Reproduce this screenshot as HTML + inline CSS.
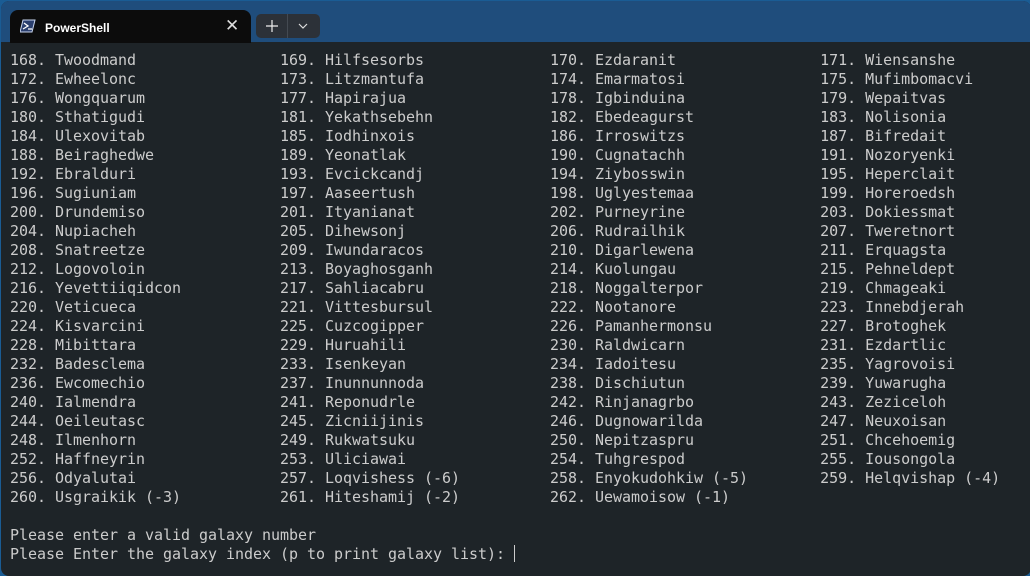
<!DOCTYPE html>
<html><head><meta charset="utf-8"><style>
*{margin:0;padding:0;box-sizing:border-box}
html,body{width:1030px;height:571px;overflow:hidden;background:#1a5c94}
.win{position:absolute;left:1px;top:1px;width:1030px;height:575px;border-radius:8px;background:#1e2428;overflow:hidden}
.bar{position:absolute;left:0;top:0;width:100%;height:41px;background:#1f4d7c}
.tab{position:absolute;left:9px;top:9px;width:241px;height:33px;background:#0c0c0c;border-radius:8px 8px 0 0}
.tab .t{position:absolute;left:35px;top:11px;color:#fff;font:bold 12px "Liberation Sans",sans-serif}
.tab .x{position:absolute;left:215px;top:6px;color:#ddd;font:17px "DejaVu Sans",sans-serif}
.btns{position:absolute;left:255px;top:13px;width:64px;height:24px;background:#2c3138;border-radius:5px}
.btns .sep{position:absolute;left:31px;top:0;width:1px;height:24px;background:#444a52}
pre{position:absolute;left:9px;top:50px;color:#cccccc;font:15px/19px "DejaVu Sans Mono","Liberation Mono",monospace;letter-spacing:-0.03px;white-space:pre}
.cur{display:inline-block;width:1px;height:17px;background:#ccc;vertical-align:-3px}
</style></head><body><div class="win">
<div class="bar"></div>
<div class="tab">
<svg style="position:absolute;left:10px;top:9px" width="16" height="14" viewBox="0 0 16 14"><path d="M3 1h12l-3 12H0z" fill="#2b3f6e" stroke="#c9d6f0" stroke-width="1"/><path d="M4 4l4 3-5 3M8 10h4" stroke="#fff" stroke-width="1.3" fill="none"/></svg>
<span class="t">PowerShell</span><span class="x">✕</span></div>
<div class="btns"><div class="sep"></div>
<svg style="position:absolute;left:9px;top:5px" width="14" height="14"><path d="M7 1v12M1 7h12" stroke="#eee" stroke-width="1.2"/></svg>
<svg style="position:absolute;left:42px;top:9px" width="10" height="6"><path d="M1 1l4 4 4-4" stroke="#ddd" stroke-width="1.2" fill="none"/></svg>
</div>
<pre>168. Twoodmand                169. Hilfsesorbs              170. Ezdaranit                171. Wiensanshe
172. Ewheelonc                173. Litzmantufa              174. Emarmatosi               175. Mufimbomacvi
176. Wongquarum               177. Hapirajua                178. Igbinduina               179. Wepaitvas
180. Sthatigudi               181. Yekathsebehn             182. Ebedeagurst              183. Nolisonia
184. Ulexovitab               185. Iodhinxois               186. Irroswitzs               187. Bifredait
188. Beiraghedwe              189. Yeonatlak                190. Cugnatachh               191. Nozoryenki
192. Ebralduri                193. Evcickcandj              194. Ziybosswin               195. Heperclait
196. Sugiuniam                197. Aaseertush               198. Uglyestemaa              199. Horeroedsh
200. Drundemiso               201. Ityanianat               202. Purneyrine               203. Dokiessmat
204. Nupiacheh                205. Dihewsonj                206. Rudrailhik               207. Tweretnort
208. Snatreetze               209. Iwundaracos              210. Digarlewena              211. Erquagsta
212. Logovoloin               213. Boyaghosganh             214. Kuolungau                215. Pehneldept
216. Yevettiiqidcon           217. Sahliacabru              218. Noggalterpor             219. Chmageaki
220. Veticueca                221. Vittesbursul             222. Nootanore                223. Innebdjerah
224. Kisvarcini               225. Cuzcogipper              226. Pamanhermonsu            227. Brotoghek
228. Mibittara                229. Huruahili                230. Raldwicarn               231. Ezdartlic
232. Badesclema               233. Isenkeyan                234. Iadoitesu                235. Yagrovoisi
236. Ewcomechio               237. Inunnunnoda              238. Dischiutun               239. Yuwarugha
240. Ialmendra                241. Reponudrle               242. Rinjanagrbo              243. Zeziceloh
244. Oeileutasc               245. Zicniijinis              246. Dugnowarilda             247. Neuxoisan
248. Ilmenhorn                249. Rukwatsuku               250. Nepitzaspru              251. Chcehoemig
252. Haffneyrin               253. Uliciawai                254. Tuhgrespod               255. Iousongola
256. Odyalutai                257. Loqvishess (-6)          258. Enyokudohkiw (-5)        259. Helqvishap (-4)
260. Usgraikik (-3)           261. Hiteshamij (-2)          262. Uewamoisow (-1)

Please enter a valid galaxy number
Please Enter the galaxy index (p to print galaxy list): <span class="cur"></span></pre>
</div></body></html>
